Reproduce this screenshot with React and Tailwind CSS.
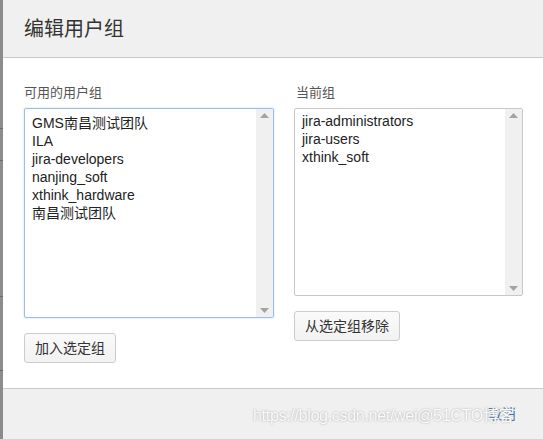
import React from "react";

const font = { fontFamily: '"Liberation Sans", Arial, "Noto Sans CJK SC", sans-serif' };

function ScrollTrack() {
  return (
    <div className="flex w-[17px] flex-col items-center justify-between bg-[#f0f0f0] py-[4px]">
      <svg width="9" height="5" viewBox="0 0 9 5"><path d="M0 5 L4.5 0 L9 5 Z" fill="#a3a3a3" /></svg>
      <svg width="9" height="5" viewBox="0 0 9 5"><path d="M0 0 L4.5 5 L9 0 Z" fill="#a3a3a3" /></svg>
    </div>
  );
}

function ListBox({ items, focused, className, pad }) {
  return (
    <div
      className={
        "flex rounded-[2px] border bg-white " +
        (focused ? "border-[#9dbde6] shadow-[0_0_2px_#bcd3f0] " : "border-[#c8c8c8] ") +
        className
      }
    >
      <div className={"flex-1 pl-[7px] text-[14px] leading-[18px] text-[#222] " + pad}>
        {items.map((t) => (
          <div key={t}>{t}</div>
        ))}
      </div>
      <ScrollTrack />
    </div>
  );
}

function Btn({ children }) {
  return (
    <button className="h-[30px] rounded-[3px] border border-[#cccccc] bg-gradient-to-b from-[#fafafa] to-[#f2f2f2] px-[10px] text-[14px] text-[#333]">
      {children}
    </button>
  );
}

export default function App() {
  return (
    <div className="flex h-[439px] w-[543px] overflow-hidden bg-[#7a7a7a]" style={font}>
      {/* page behind the dialog */}
      <div className="relative w-[3px] shrink-0 bg-[#8c8c8c]">
        <div className="absolute left-0 top-[128px] h-[1px] w-[3px] bg-[#6b6b6b]" />
        <div className="absolute left-0 top-[160px] h-[1px] w-[3px] bg-[#6b6b6b]" />
        <div className="absolute left-0 top-[296px] h-[1px] w-[3px] bg-[#6b6b6b]" />
        <div className="absolute left-0 top-[370px] h-[1px] w-[3px] bg-[#6b6b6b]" />
      </div>

      <div className="flex flex-1 flex-col bg-white">
        {/* header */}
        <div className="flex h-[58px] shrink-0 items-center border-b border-[#c9c9c9] bg-[#f0f0f0] pl-[21px]">
          <h2 className="text-[20px] font-normal text-[#333]">编辑用户组</h2>
        </div>

        {/* body */}
        <div className="flex flex-1 gap-[20px] pl-[21px] pt-[27px]">
          <div className="flex w-[250px] flex-col">
            <div className="mb-[7px] text-[13px] leading-[16px] text-[#555]">可用的用户组</div>
            <ListBox
              focused
              pad="pt-[5px]"
              className="h-[210px]"
              items={["GMS南昌测试团队", "ILA", "jira-developers", "nanjing_soft", "xthink_hardware", "南昌测试团队"]}
            />
            <div className="mt-[15px]">
              <Btn>加入选定组</Btn>
            </div>
          </div>

          <div className="flex w-[229px] flex-col">
            <div className="mb-[7px] pl-[2px] text-[13px] leading-[16px] text-[#555]">当前组</div>
            <ListBox
              pad="pt-[3px]"
              className="h-[188px]"
              items={["jira-administrators", "jira-users", "xthink_soft"]}
            />
            <div className="mt-[15px]">
              <Btn>从选定组移除</Btn>
            </div>
          </div>
        </div>

        {/* footer */}
        <div className="relative flex h-[51px] shrink-0 items-center justify-end border-t border-[#c9c9c9] bg-[#f0f0f0] pr-[27px]">
          <a className="text-[14px] text-[#3b73af]">取消</a>
          <span className="pointer-events-none absolute left-[250px] top-[15px] text-[16px] tracking-[-0.3px] text-[#fbfbfb] [text-shadow:0_0_2px_#a0a0a0]">
            https://blog.csdn.net/wei@51CTO博客
          </span>
        </div>
      </div>
    </div>
  );
}
